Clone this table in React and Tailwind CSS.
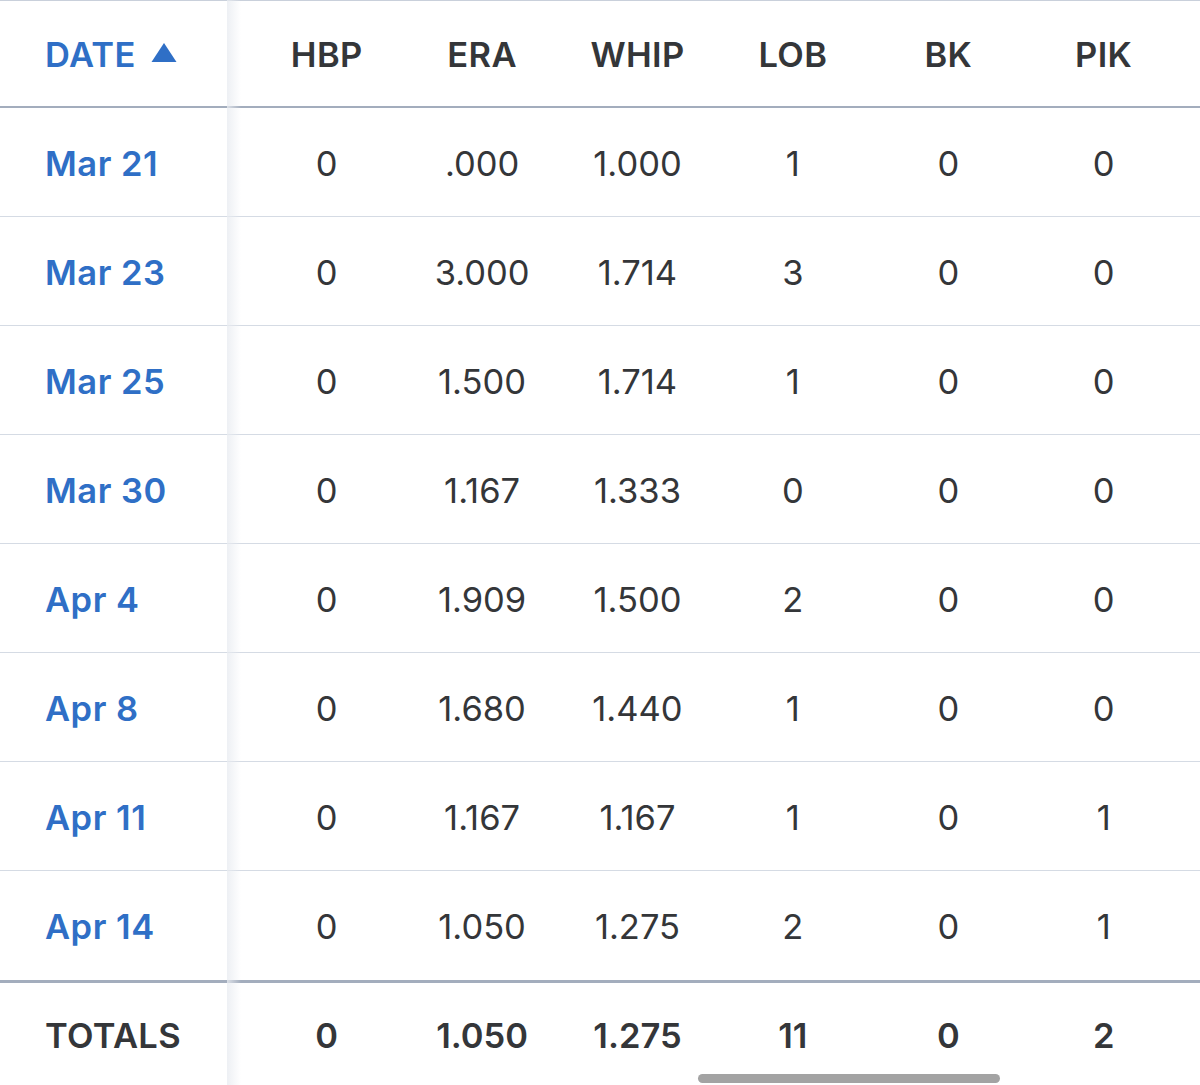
import React from "react";

/* ---------- game log rows ---------- */
const COLUMNS = ["HBP", "ERA", "WHIP", "LOB", "BK", "PIK"];

const ROWS = [
  { date: "Mar 21", stats: ["0", ".000", "1.000", "1", "0", "0"] },
  { date: "Mar 23", stats: ["0", "3.000", "1.714", "3", "0", "0"] },
  { date: "Mar 25", stats: ["0", "1.500", "1.714", "1", "0", "0"] },
  { date: "Mar 30", stats: ["0", "1.167", "1.333", "0", "0", "0"] },
  { date: "Apr 4", stats: ["0", "1.909", "1.500", "2", "0", "0"] },
  { date: "Apr 8", stats: ["0", "1.680", "1.440", "1", "0", "0"] },
  { date: "Apr 11", stats: ["0", "1.167", "1.167", "1", "0", "1"] },
  { date: "Apr 14", stats: ["0", "1.050", "1.275", "2", "0", "1"] },
];

const TOTALS = ["0", "1.050", "1.275", "11", "0", "2"];

const GRID = "grid grid-cols-[249px_repeat(6,155.4px)] items-center";

function SortUp() {
  return (
    <svg width="26" height="20" viewBox="0 0 26 20" className="ml-[15px] mb-[6px]">
      <path d="M13 1 L25.5 20 L0.5 20 Z" fill="#2f6fc6" />
    </svg>
  );
}

export default function App() {
  return (
    <div
      className="relative w-[1200px] h-[1085px] overflow-hidden bg-white text-[#343639]"
      style={{ fontFamily: "Inter, 'Noto Sans', sans-serif" }}
    >
      {/* header */}
      <div className={`${GRID} h-[108px] border-t border-t-[#c9d0db] border-b-2 border-b-[#a3adbd] pt-[3px]`}>
        <div className="flex items-center pl-[45px] text-[34.5px] font-semibold tracking-[0.01em] text-[#2f6fc6]">
          DATE
          <SortUp />
        </div>
        {COLUMNS.map((c) => (
          <div key={c} className="text-center text-[34.5px] font-semibold tracking-[0.01em]">
            {c}
          </div>
        ))}
      </div>

      {/* body */}
      {ROWS.map((r, i) => (
        <div
          key={r.date}
          className={`${GRID} h-[109px] pt-[3px] ${i < ROWS.length - 1 ? "border-b border-b-[#d5dbe4]" : ""}`}
        >
          <div className="pl-[45px] text-[34.5px] font-semibold tracking-[0.015em] text-[#2f6fc6]">{r.date}</div>
          {r.stats.map((s, j) => (
            <div key={j} className="text-center text-[34.5px] font-normal">
              {s}
            </div>
          ))}
        </div>
      ))}

      {/* totals */}
      <div className={`${GRID} h-[108px] border-t-[3px] border-t-[#a3adbd]`}>
        <div className="pl-[45px] text-[34.5px] font-semibold tracking-[0.01em]">TOTALS</div>
        {TOTALS.map((s, j) => (
          <div key={j} className="text-center text-[34.5px] font-semibold">
            {s}
          </div>
        ))}
      </div>

      {/* sticky column edge shadow */}
      <div className="absolute top-0 bottom-0 left-[227px] w-[14px] bg-gradient-to-r from-[#e9ecf1] to-transparent opacity-80" />

      {/* scroll indicator */}
      <div className="absolute left-[698px] top-[1074px] w-[302px] h-[9px] rounded-full bg-[#a3a3a3]" />
    </div>
  );
}
